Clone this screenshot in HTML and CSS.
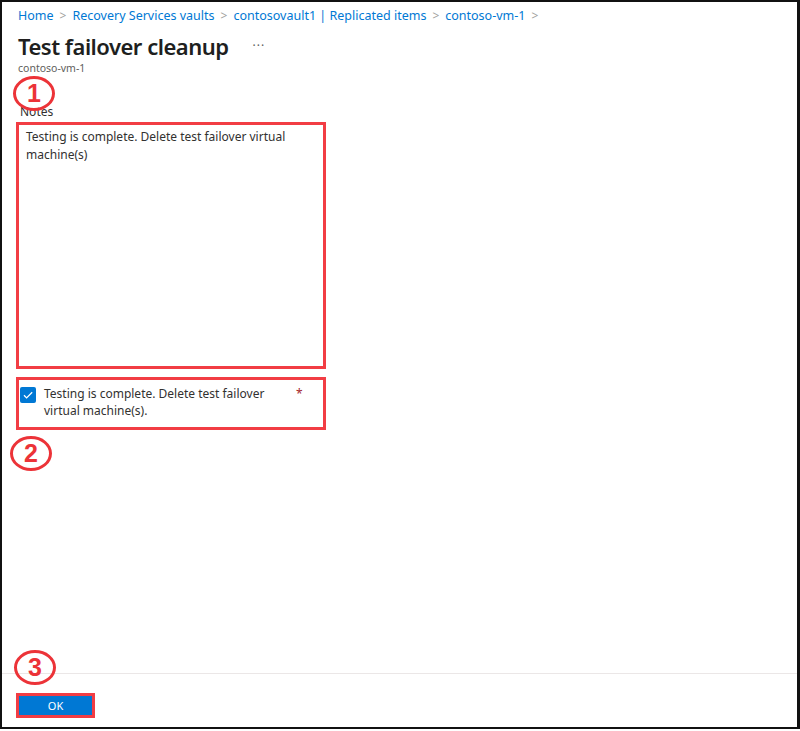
FILE: index.html
```html
<!DOCTYPE html>
<html lang="en">
<head>
<meta charset="utf-8">
<title>Test failover cleanup</title>
<link rel="stylesheet" href="styles.css">
</head>
<body>
<div class="frame">
  <nav class="breadcrumb">
    <a>Home</a><span class="sep">&gt;</span>
    <a>Recovery Services vaults</a><span class="sep">&gt;</span>
    <a>contosovault1 | Replicated items</a><span class="sep">&gt;</span>
    <a>contoso-vm-1</a><span class="sep">&gt;</span>
  </nav>
  <header class="title-row">
    <h1 class="title">Test failover cleanup</h1>
    <span class="more">···</span>
  </header>
  <div class="subtitle">contoso-vm-1</div>

  <main class="content">
    <div class="label">Notes</div>
    <div class="callout callout-1">1</div>
    <div class="hl notes-box">
      <div class="notes-text">Testing is complete. Delete test failover virtual machine(s)</div>
    </div>
    <div class="hl check-box">
      <span class="checkbox">
        <svg viewBox="0 0 16 16" width="16" height="16"><path d="M4 8.3l2.6 2.6L12.2 5.3" fill="none" stroke="#fff" stroke-width="1.3"/></svg>
      </span>
      <span class="check-text">Testing is complete. Delete test failover virtual machine(s).</span>
      <span class="req">*</span>
    </div>
    <div class="callout callout-2">2</div>
  </main>

  <footer class="footer">
    <div class="callout callout-3">3</div>
    <div class="hl-btn"><button class="ok">OK</button></div>
  </footer>
</div>
</body>
</html>
```
FILE: styles.css
```css
* { box-sizing: border-box; }
html, body { margin: 0; padding: 0; background: #fff; }
body { font-family: "Noto Sans", "Open Sans", sans-serif; color: #323130; }

.frame {
  position: relative;
  width: 800px;
  height: 729px;
  border: 2px solid #111;
  border-right-width: 3px;
  display: flex;
  flex-direction: column;
}

.breadcrumb {
  padding: 5px 0 0 16px;
  font-size: 12.5px;
  line-height: 18px;
  color: #0078d4;
  display: flex;
  align-items: center;
  white-space: nowrap;
}
.breadcrumb a { color: #0078d4; }
.breadcrumb .sep { color: #a19f9d; margin: 0 6px; font-size: 12px; }

.title-row {
  display: flex;
  align-items: center;
  padding: 6px 0 0 16px;
  height: 36px;
}
.title {
  margin: 0;
  font-size: 22px;
  font-weight: 600;
  letter-spacing: -0.5px;
  color: #201f1e;
  line-height: 30px;
}
.more { margin-left: 24px; font-size: 12px; color: #605e5c; letter-spacing: 1px; line-height: 20px; }

.subtitle {
  padding: 0 0 0 16px;
  font-size: 10.5px;
  line-height: 14px;
  color: #605e5c;
}

.content {
  position: relative;
  padding: 29px 0 0 14px;
  flex: 1;
}
.label {
  font-size: 12px;
  line-height: 16px;
  color: #323130;
  padding-left: 4px;
}
.hl {
  border: 3px solid #f23d44;
  width: 310px;
}
.notes-box {
  margin-top: 2px;
  height: 247px;
  padding: 3px 8px 0 7px;
}
.notes-text {
  font-size: 12px;
  line-height: 18px;
  color: #323130;
}
.check-box {
  margin-top: 8px;
  height: 53px;
  display: flex;
  align-items: flex-start;
  padding: 5px 0 0 1px;
  font-size: 12px;
  line-height: 17px;
}
.checkbox {
  flex: none;
  width: 16px;
  height: 16px;
  margin-top: 2px;
  background: #0078d4;
  border-radius: 2px;
  display: inline-flex;
}
.check-text { margin-left: 8px; width: 240px; color: #323130; }
.req { color: #a4262c; margin-left: 12px; font-size: 12px; }

.callout {
  position: absolute;
  width: 42px;
  height: 35px;
  border: 3px solid #ec3338;
  border-radius: 50%;
  background: transparent;
  color: #ec3338;
  font-weight: 700;
  font-size: 25px;
  display: flex;
  align-items: center;
  justify-content: center;
  line-height: 1;
  font-family: "Liberation Sans", Arial, sans-serif;
}
.callout-1 { left: 11px; top: 1px; }
.callout-2 { left: 8px; top: 361px; }
.callout-3 { left: 12px; top: -24px; }

.footer {
  position: relative;
  border-top: 1px solid #ebe7e7;
  height: 54px;
  padding: 19px 0 0 14px;
}
.hl-btn {
  display: inline-block;
  border: 3px solid #f23d44;
}
.ok {
  display: block;
  width: 73px;
  height: 19px;
  background: #0078d4;
  border: 0;
  color: #fff;
  font-family: "Noto Sans", sans-serif;
  font-size: 11px;
  line-height: 19px;
  padding: 0;
}
```
